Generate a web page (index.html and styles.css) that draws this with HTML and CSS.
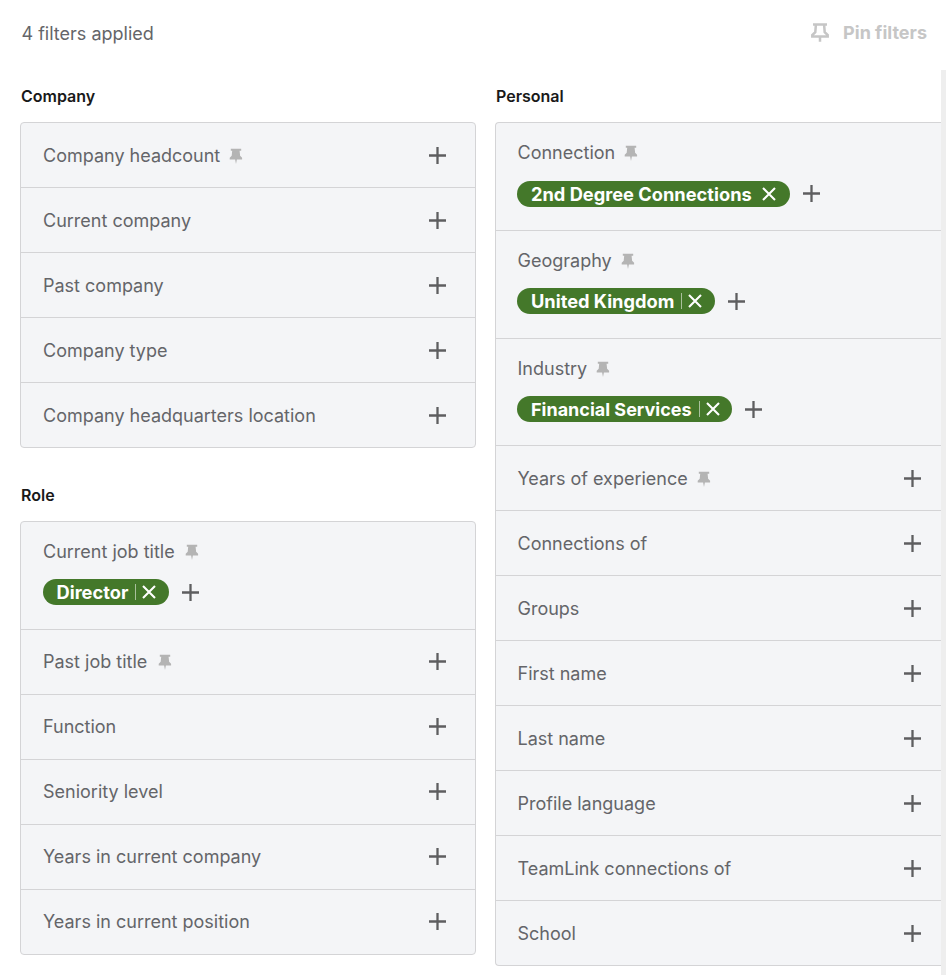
FILE: index.html
```html
<!DOCTYPE html>
<html lang="en">
<head>
<meta charset="utf-8">
<title>Filters</title>
<link rel="stylesheet" href="styles.css">
</head>
<body>
<svg class="defs" width="0" height="0" aria-hidden="true">
  <symbol id="pin" viewBox="0 0 16 16"><path d="M2.800 .8h10.400v2h-1.600l.5 5 2 2v1.700H8.900L8 16l-.9-4.500H1.700V9.800l2-2 .5-5H2.800z"/></symbol>
  <symbol id="pin-outline" viewBox="0 0 20 20"><path d="M3 1.600h14M5.900 1.600l-.6 7.500-3 2.900v1.400h15.400V12l-3-2.900-.6-7.500M10 13.400v5.400" fill="none" stroke="currentColor" stroke-width="2.500"/></symbol>
  <symbol id="plus" viewBox="0 0 17 17"><path d="M0 8.500h17M8.500 0v17" fill="none" stroke="currentColor" stroke-width="2.300"/></symbol>
  <symbol id="x" viewBox="0 0 14 14"><path d="M1 1l12 12M13 1L1 13" fill="none" stroke="currentColor" stroke-width="2.100"/></symbol>
</svg>
<header class="top">
  <span class="applied">4 filters applied</span>
  <span class="pin-all"><svg class="pin-all-icon"><use href="#pin-outline"/></svg>Pin filters</span>
</header>
<main class="board">
  <div class="col">
    <section class="group">
      <h2 class="group-title">Company</h2>
      <div class="panel">
        <div class="row"><span class="label">Company headcount<svg class="pin"><use href="#pin"/></svg></span><svg class="plus"><use href="#plus"/></svg></div>
        <div class="row"><span class="label">Current company</span><svg class="plus"><use href="#plus"/></svg></div>
        <div class="row"><span class="label">Past company</span><svg class="plus"><use href="#plus"/></svg></div>
        <div class="row"><span class="label">Company type</span><svg class="plus"><use href="#plus"/></svg></div>
        <div class="row"><span class="label">Company headquarters location</span><svg class="plus"><use href="#plus"/></svg></div>
      </div>
    </section>
    <section class="group">
      <h2 class="group-title">Role</h2>
      <div class="panel panel-role">
        <div class="row-open">
          <span class="label">Current job title<svg class="pin pin-far"><use href="#pin"/></svg></span>
          <div class="chips"><span class="chip">Director<i class="sep"></i><svg class="x"><use href="#x"/></svg></span><svg class="plus"><use href="#plus"/></svg></div>
        </div>
        <div class="row"><span class="label">Past job title<svg class="pin pin-far"><use href="#pin"/></svg></span><svg class="plus"><use href="#plus"/></svg></div>
        <div class="row"><span class="label">Function</span><svg class="plus"><use href="#plus"/></svg></div>
        <div class="row"><span class="label">Seniority level</span><svg class="plus"><use href="#plus"/></svg></div>
        <div class="row"><span class="label">Years in current company</span><svg class="plus"><use href="#plus"/></svg></div>
        <div class="row"><span class="label">Years in current position</span><svg class="plus"><use href="#plus"/></svg></div>
      </div>
    </section>
  </div>
  <div class="col">
    <section class="group">
      <h2 class="group-title">Personal</h2>
      <div class="panel panel-cut">
        <div class="row-open">
          <span class="label">Connection<svg class="pin"><use href="#pin"/></svg></span>
          <div class="chips chips-low"><span class="chip chip-wide">2nd Degree Connections<svg class="x x-wide"><use href="#x"/></svg></span><svg class="plus"><use href="#plus"/></svg></div>
        </div>
        <div class="row-open">
          <span class="label">Geography<svg class="pin"><use href="#pin"/></svg></span>
          <div class="chips"><span class="chip">United Kingdom<i class="sep"></i><svg class="x"><use href="#x"/></svg></span><svg class="plus"><use href="#plus"/></svg></div>
        </div>
        <div class="row-open row-open-short">
          <span class="label">Industry<svg class="pin"><use href="#pin"/></svg></span>
          <div class="chips"><span class="chip chip-fit">Financial Services<i class="sep"></i><svg class="x"><use href="#x"/></svg></span><svg class="plus"><use href="#plus"/></svg></div>
        </div>
        <div class="row"><span class="label">Years of experience<svg class="pin"><use href="#pin"/></svg></span><svg class="plus"><use href="#plus"/></svg></div>
        <div class="row"><span class="label">Connections of</span><svg class="plus"><use href="#plus"/></svg></div>
        <div class="row"><span class="label">Groups</span><svg class="plus"><use href="#plus"/></svg></div>
        <div class="row"><span class="label">First name</span><svg class="plus"><use href="#plus"/></svg></div>
        <div class="row"><span class="label">Last name</span><svg class="plus"><use href="#plus"/></svg></div>
        <div class="row"><span class="label">Profile language</span><svg class="plus"><use href="#plus"/></svg></div>
        <div class="row"><span class="label">TeamLink connections of</span><svg class="plus"><use href="#plus"/></svg></div>
        <div class="row"><span class="label">School</span><svg class="plus"><use href="#plus"/></svg></div>
      </div>
    </section>
  </div>
</main>
</body>
</html>
```
FILE: styles.css
```css
* { box-sizing: border-box; }
html, body { margin: 0; padding: 0; background: #fff; }
body {
  width: 946px;
  height: 975px;
  overflow: hidden;
  font-family: Inter, "Liberation Sans", sans-serif;
  color: #5e5e5e;
}
.defs { position: absolute; }
.top {
  height: 70px;
  padding: 0 19px 5px 21.500px;
  display: flex;
  align-items: center;
  justify-content: space-between;
}
.applied { font-size: 18px; color: #646569; margin-top: 2px; }
.pin-all {
  display: flex;
  align-items: center;
  gap: 13px;
  font-size: 18px;
  font-weight: 700;
  color: #c6c6c6;
}
.pin-all-icon { width: 20px; height: 20px; }
.board {
  display: grid;
  grid-template-columns: 456px 446px;
  column-gap: 19px;
  width: 946px;
  height: 905px;
  padding-left: 20px;
  border-right: 5px solid #eeeeee;
}
.group { margin-bottom: 21px; }
.group-title {
  margin: 0 0 16px 1px;
  height: 36px;
  padding-top: 17px;
  font-size: 16px;
  line-height: 18px;
  font-weight: 600;
  color: #191919;
}
.panel {
  background: #f4f5f7;
  border: 1px solid #d4d4d6;
  border-radius: 4px;
  overflow: hidden;
}
.panel-cut { border-right: 0; border-radius: 4px 0 0 4px; }
.row, .row-open {
  border-bottom: 1px solid #d4d4d6;
  padding-left: 22px;
}
.panel-cut .row, .panel-cut .row-open { padding-left: 21.500px; }
.row:last-child { border-bottom: 0; height: 64px; }
.row {
  height: 65px;
  padding-top: 2px;
  padding-right: 29px;
  display: flex;
  align-items: center;
  justify-content: space-between;
}
.panel-role .row { padding-top: 0; }
.panel-cut .row { padding-right: 20px; }
.row .plus { margin-top: -2px; }
.row-open { height: 108px; padding-top: 18px; }
.row-open-short { height: 107px; }
.label {
  display: flex;
  align-items: center;
  font-size: 18px;
  line-height: 24px;
  color: #646569;
}
.pin { width: 16px; height: 16px; margin-left: 8px; fill: #b4b4b4; }
.pin-far { margin-left: 9.500px; }
.chips { display: flex; align-items: center; gap: 13px; margin-top: 15px; margin-left: -0.500px; }
.chips-low { margin-top: 16px; }
.chips-low .plus { margin-top: -2px; }
.chip {
  display: inline-flex;
  align-items: center;
  height: 26px;
  padding: 0 13px 0 14px;
  border-radius: 13px;
  background: #44782a;
  color: #fff;
  font-size: 18.250px;
  font-weight: 700;
}
.chip-wide { padding-right: 14px; }
.chip-fit { font-size: 18px; padding-right: 12px; }
.sep { width: 1px; height: 16px; margin: 0 6px 0 7px; background: #a9c09c; }
.x { width: 14px; height: 14px; color: #fff; }
.x-wide { margin-left: 10px; }
.plus { width: 17px; height: 17px; color: #5e5e60; flex: none; }
```
